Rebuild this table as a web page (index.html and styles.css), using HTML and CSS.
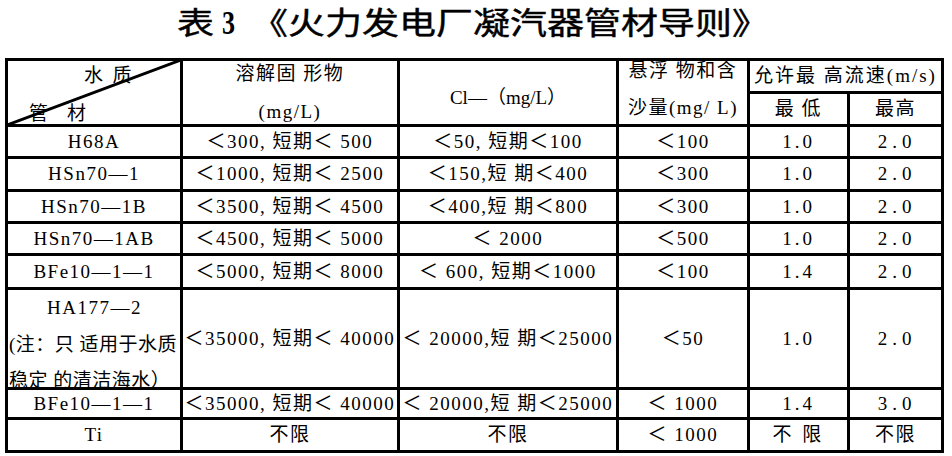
FILE: index.html
```html
<!DOCTYPE html>
<html lang="zh">
<head>
<meta charset="utf-8">
<title>表3 火力发电厂凝汽器管材导则</title>
<link rel="stylesheet" href="styles.css">
</head>
<body>
<div class="title"><div class="title-inner"><span class="t-cjk">表</span><span class="t-num">3</span><span class="t-cjk">《火力发电厂凝汽器管材导则》</span></div></div>
<table class="grid">
  <colgroup>
    <col class="c1"><col class="c2"><col class="c3"><col class="c4"><col class="c5"><col class="c6">
  </colgroup>
  <tr class="r-h1">
    <th rowspan="2" class="diag">
      <svg class="diag-line" viewBox="0 0 100 100" preserveAspectRatio="none"><line x1="100" y1="0" x2="0" y2="100" stroke="#000" stroke-width="3" vector-effect="non-scaling-stroke"/></svg>
      <div class="diag-text"><div class="dt-top">水&ensp;质</div><div class="dt-bot">管&emsp;材</div></div>
    </th>
    <th rowspan="2"><div class="two-line"><div>溶解固 形物</div><div>(mg/L)</div></div></th>
    <th rowspan="2" class="cl">Cl—（mg/L）</th>
    <th rowspan="2"><div class="two-line tl-b"><div class="l1">悬浮 物和含</div><div>沙量(mg/ L)</div></div></th>
    <th colspan="2" class="speed">允许最 高流速(m/s)</th>
  </tr>
  <tr class="r-h2"><th>最 低</th><th>最高</th></tr>
  <tr class="r32"><td>H68A</td><td>＜300, 短期＜ 500</td><td>＜50, 短期＜100</td><td>＜100</td><td class="v1">1.0</td><td class="v2">2.0</td></tr>
  <tr class="r33"><td>HSn70—1</td><td>＜1000, 短期＜ 2500</td><td>＜150,短 期＜400</td><td>＜300</td><td class="v1">1.0</td><td class="v2">2.0</td></tr>
  <tr class="r32"><td>HSn70—1B</td><td>＜3500, 短期＜ 4500</td><td>＜400,短 期＜800</td><td>＜300</td><td class="v1">1.0</td><td class="v2">2.0</td></tr>
  <tr class="r32"><td>HSn70—1AB</td><td>＜4500, 短期＜ 5000</td><td>＜ 2000</td><td>＜500</td><td class="v1">1.0</td><td class="v2">2.0</td></tr>
  <tr class="r34"><td>BFe10—1—1</td><td>＜5000, 短期＜ 8000</td><td>＜ 600, 短期＜1000</td><td>＜100</td><td class="v1">1.4</td><td class="v2">2.0</td></tr>
  <tr class="r100"><td class="note"><div class="note-box"><div class="nc">HA177—2</div><div>(注：只 适用于水质</div><div>稳定 的清洁海水）</div></div></td><td>＜35000, 短期＜ 40000</td><td>＜ 20000,短 期＜25000</td><td>＜50</td><td class="v1">1.0</td><td class="v2">2.0</td></tr>
  <tr class="r30"><td>BFe10—1—1</td><td>＜35000, 短期＜ 40000</td><td>＜ 20000,短 期＜25000</td><td>＜ 1000</td><td class="v1">1.4</td><td class="v2">3.0</td></tr>
  <tr class="r33"><td>Ti</td><td>不限</td><td>不限</td><td>＜ 1000</td><td class="v1">不 限</td><td>不限</td></tr>
</table>
</body>
</html>
```
FILE: styles.css
```css
html, body {
  margin: 0;
  padding: 0;
  background: #fff;
  color: #000;
}
body {
  font-family: "Liberation Serif", "Noto Sans CJK SC", serif;
}
.title {
  height: 46px;
  display: flex;
  justify-content: center;
  align-items: center;
  padding-right: 6px;
}
.title-inner {
  font-size: 37px;
  line-height: 46px;
  font-weight: 400;
  -webkit-text-stroke: 0.5px #000;
  white-space: nowrap;
  transform: scaleY(0.82);
}
.t-cjk {
  font-family: "Noto Sans CJK SC", sans-serif;
}
.t-num {
  display: inline-block;
  font-family: "Liberation Serif", serif;
  font-weight: 700;
  font-size: 42px;
  transform: scaleX(0.62);
  margin: 0 12px 0 4px;
  -webkit-text-stroke: 0;
}
.grid {
  border-collapse: collapse;
  table-layout: fixed;
  margin: 12px 0 0 5px;
  font-size: 19px;
  letter-spacing: 1.5px;
}
.c1 { width: 175px; }
.c2 { width: 217px; }
.c3 { width: 219px; }
.c4 { width: 131px; }
.c5 { width: 100px; }
.c6 { width: 94px; }
th, td {
  border: 3px solid #000;
  padding: 0;
  text-align: center;
  vertical-align: middle;
  white-space: nowrap;
  font-weight: normal;
  line-height: 22px;
}
.r-h1 { height: 33px; }
.r-h2 { height: 33px; }
.r30 { height: 30px; }
.r32 { height: 32px; }
.r33 { height: 33px; }
.r34 { height: 34px; }
.r100 { height: 100px; }
.diag {
  position: relative;
  text-align: left;
}
.diag-line {
  position: absolute;
  left: -1px;
  top: -1px;
  width: calc(100% + 2px);
  height: calc(100% + 2px);
}
.diag-text {
  height: 62px;
  display: flex;
  flex-direction: column;
  justify-content: space-between;
  letter-spacing: 0;
}
.dt-top {
  padding-left: 76px;
  line-height: 28px;
}
.dt-bot {
  padding-left: 21px;
  line-height: 20px;
}
.two-line {
  height: 62px;
  display: flex;
  flex-direction: column;
  justify-content: space-between;
}
.two-line > div {
  line-height: 24px;
}
.tl-b .l1 {
  margin-top: -3px;
}
.tl-b {
  padding-bottom: 4px;
  box-sizing: border-box;
}
.cl {
  letter-spacing: 0;
  padding-top: 10px;
}
.speed {
  letter-spacing: 2px;
}
.v1 { letter-spacing: 3px; }
.v2 { letter-spacing: 5px; padding-left: 3px; }
.note {
  text-align: left;
  vertical-align: top;
}
.note-box {
  height: 97px;
  overflow: hidden;
  line-height: 36.5px;
  letter-spacing: 0.5px;
  padding-left: 1px;
}
.nc {
  text-align: center;
  letter-spacing: 1.5px;
}
```
